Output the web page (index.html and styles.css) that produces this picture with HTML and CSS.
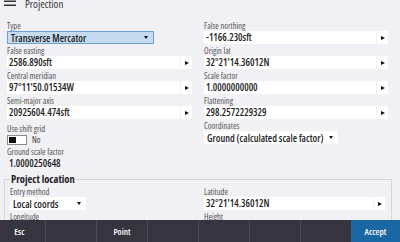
FILE: index.html
```html
<!DOCTYPE html>
<html lang="en">
  <head>
    <meta charset="UTF-8" />
    <title>Projection</title>
    <link rel="stylesheet" href="styles.css">
  </head>
  <body>
    <header class="topbar">
      <svg class="menu-icon" viewBox="0 0 12 10" aria-hidden="true">
        <rect x="0" y="0.5" width="12" height="1.5" fill="#333" />
        <rect x="0" y="4.5" width="12" height="1.5" fill="#333" />
        <rect x="0" y="8.5" width="12" height="1.5" fill="#333" />
      </svg>
      <h1>Projection</h1>
    </header>

    <main class="content">
      <div class="cols">
        <div class="col">
          <div class="field">
            <span class="field-label">Type</span>
            <div class="dropdown is-focused w-type">Transverse Mercator</div>
          </div>
          <div class="field">
            <span class="field-label">False easting</span>
            <div class="entry">
              <div class="entry-value">2586.890sft</div>
              <div class="entry-go"></div>
            </div>
          </div>
          <div class="field">
            <span class="field-label">Central meridian</span>
            <div class="entry">
              <div class="entry-value">97°11'50.01534W</div>
              <div class="entry-go"></div>
            </div>
          </div>
          <div class="field">
            <span class="field-label">Semi-major axis</span>
            <div class="entry">
              <div class="entry-value">20925604.474sft</div>
              <div class="entry-go"></div>
            </div>
          </div>
          <div class="field field-shift">
            <span class="field-label">Use shift grid</span>
            <div class="switch">
              <span class="switch-track"><span class="switch-knob"></span></span>
              <span>No</span>
            </div>
          </div>
          <div class="field">
            <span class="field-label">Ground scale factor</span>
            <div class="static-value">1.0000250648</div>
          </div>
        </div>

        <div class="col">
          <div class="field">
            <span class="field-label">False northing</span>
            <div class="entry">
              <div class="entry-value">-1166.230sft</div>
              <div class="entry-go"></div>
            </div>
          </div>
          <div class="field">
            <span class="field-label">Origin lat</span>
            <div class="entry">
              <div class="entry-value">32°21'14.36012N</div>
              <div class="entry-go"></div>
            </div>
          </div>
          <div class="field">
            <span class="field-label">Scale factor</span>
            <div class="entry">
              <div class="entry-value">1.0000000000</div>
              <div class="entry-go"></div>
            </div>
          </div>
          <div class="field">
            <span class="field-label">Flattening</span>
            <div class="entry">
              <div class="entry-value">298.2572229329</div>
              <div class="entry-go"></div>
            </div>
          </div>
          <div class="field field-coords">
            <span class="field-label">Coordinates</span>
            <div class="dropdown w-coords">Ground (calculated scale factor)</div>
          </div>
        </div>
      </div>

      <fieldset class="group">
        <legend>Project location</legend>
        <div class="cols cols-group">
          <div class="col">
            <div class="field">
              <span class="field-label">Entry method</span>
              <div class="dropdown w-entry">Local coords</div>
            </div>
            <div class="field">
              <span class="field-label">Longitude</span>
              <div class="entry">
                <div class="entry-value">97°11'50.01534W</div>
                <div class="entry-go"></div>
              </div>
            </div>
          </div>
          <div class="col">
            <div class="field">
              <span class="field-label">Latitude</span>
              <div class="entry">
                <div class="entry-value">32°21'14.36012N</div>
                <div class="entry-go"></div>
              </div>
            </div>
            <div class="field">
              <span class="field-label">Height</span>
              <div class="entry">
                <div class="entry-value">0.000sft</div>
                <div class="entry-go"></div>
              </div>
            </div>
          </div>
        </div>
      </fieldset>
    </main>

    <nav class="softkeys">
      <button class="softkey softkey-esc">Esc</button>
      <button class="softkey"></button>
      <button class="softkey">Point</button>
      <button class="softkey"></button>
      <button class="softkey"></button>
      <button class="softkey"></button>
      <button class="softkey"></button>
      <button class="softkey primary">Accept</button>
    </nav>
  </body>
</html>
```

FILE: styles.css
```css
/* Reset */
* {
  box-sizing: border-box;
}
html,
body {
  margin: 0;
  overflow: hidden;
}
body {
  font-family: "Open Sans", "Noto Sans", sans-serif;
  font-stretch: 82%;
  background: #f1f0f5;
  color: #1e1e1e;
  width: 400px;
  height: 242px;
}

/* Header */
.topbar {
  display: flex;
  align-items: center;
  gap: 9px;
  height: 14px;
  margin-top: -4px;
  padding-left: 4px;
}
.menu-icon {
  width: 12px;
  height: 10px;
  margin-top: -4px;
}
.topbar h1 {
  margin: 0;
  font-size: 11px;
  font-weight: 400;
  color: #3a3a3a;
}

/* Form */
.content {
  padding: 11px 12px 0 7px;
}
.cols {
  display: grid;
  grid-template-columns: 185px 184px;
  column-gap: 12px;
  align-items: start;
}
.field {
  margin-bottom: 2px;
}
.field-label {
  display: block;
  height: 9px;
  margin-bottom: 1px;
  font-size: 8.5px;
  line-height: 9px;
  color: #555;
  white-space: nowrap;
}
.entry {
  display: flex;
  gap: 1px;
  height: 13px;
}
.entry-value {
  flex: 1;
  background: #fff;
  padding-left: 2px;
  font-size: 10px;
  font-weight: 600;
  line-height: 13px;
  white-space: nowrap;
  overflow: hidden;
}
.entry-go {
  width: 11px;
  background: #fff;
  display: flex;
  align-items: center;
  justify-content: center;
}
.entry-go::before {
  content: "";
  border-left: 4px solid #111;
  border-top: 2.5px solid transparent;
  border-bottom: 2.5px solid transparent;
}

.dropdown {
  display: flex;
  align-items: center;
  justify-content: space-between;
  height: 13px;
  background: #fff;
  padding: 0 5px 0 3px;
  font-size: 10px;
  font-weight: 600;
  white-space: nowrap;
}
.dropdown::after {
  content: "";
  border-top: 3px solid #111;
  border-left: 2.5px solid transparent;
  border-right: 2.5px solid transparent;
}
.dropdown.is-focused {
  background: #c6dbef;
  border: 1px solid #6b9fd0;
}
.w-type {
  width: 147px;
}
.w-coords {
  width: 134px;
}
.w-entry {
  width: 76px;
}

.field-shift {
  margin-top: 5px;
}
.field-coords {
  margin-top: 2px;
}
.switch {
  display: flex;
  align-items: center;
  gap: 5px;
  height: 11px;
  font-size: 8.5px;
  color: #333;
}
.switch-track {
  display: block;
  width: 20px;
  height: 10px;
  padding: 1px;
  border: 1px solid #8a8a8a;
  background: #fff;
}
.switch-knob {
  display: block;
  width: 7px;
  height: 100%;
  background: #111;
}
.static-value {
  padding-left: 2px;
  font-size: 10px;
  font-weight: 600;
  line-height: 13px;
}

/* Project location */
.group {
  margin: 1px -4px 0 -3px;
  padding: 2px 5px 0;
  border: 1px solid #d6d5dc;
}
.group legend {
  padding: 0 1px;
  font-size: 10.5px;
  font-weight: 700;
  line-height: 12px;
  color: #222;
}
.cols-group {
  grid-template-columns: 182px 181px;
}

/* Softkeys */
.softkeys {
  position: fixed;
  left: 0;
  right: 0;
  bottom: 0;
  height: 22px;
  display: grid;
  grid-template-columns: 45px repeat(6, 51px) 49px;
  background: #35343f;
}
.softkey {
  margin: 0;
  padding: 0;
  border: none;
  border-left: 1px solid #4b4a56;
  background: transparent;
  color: #fff;
  font-family: inherit;
  font-stretch: inherit;
  font-size: 9px;
  font-weight: 600;
}
.softkey:first-child {
  border-left: none;
}
.softkey-esc {
  padding-right: 6px;
}
.softkey.primary {
  border-left: none;
  background: #1a68a3;
}
```
